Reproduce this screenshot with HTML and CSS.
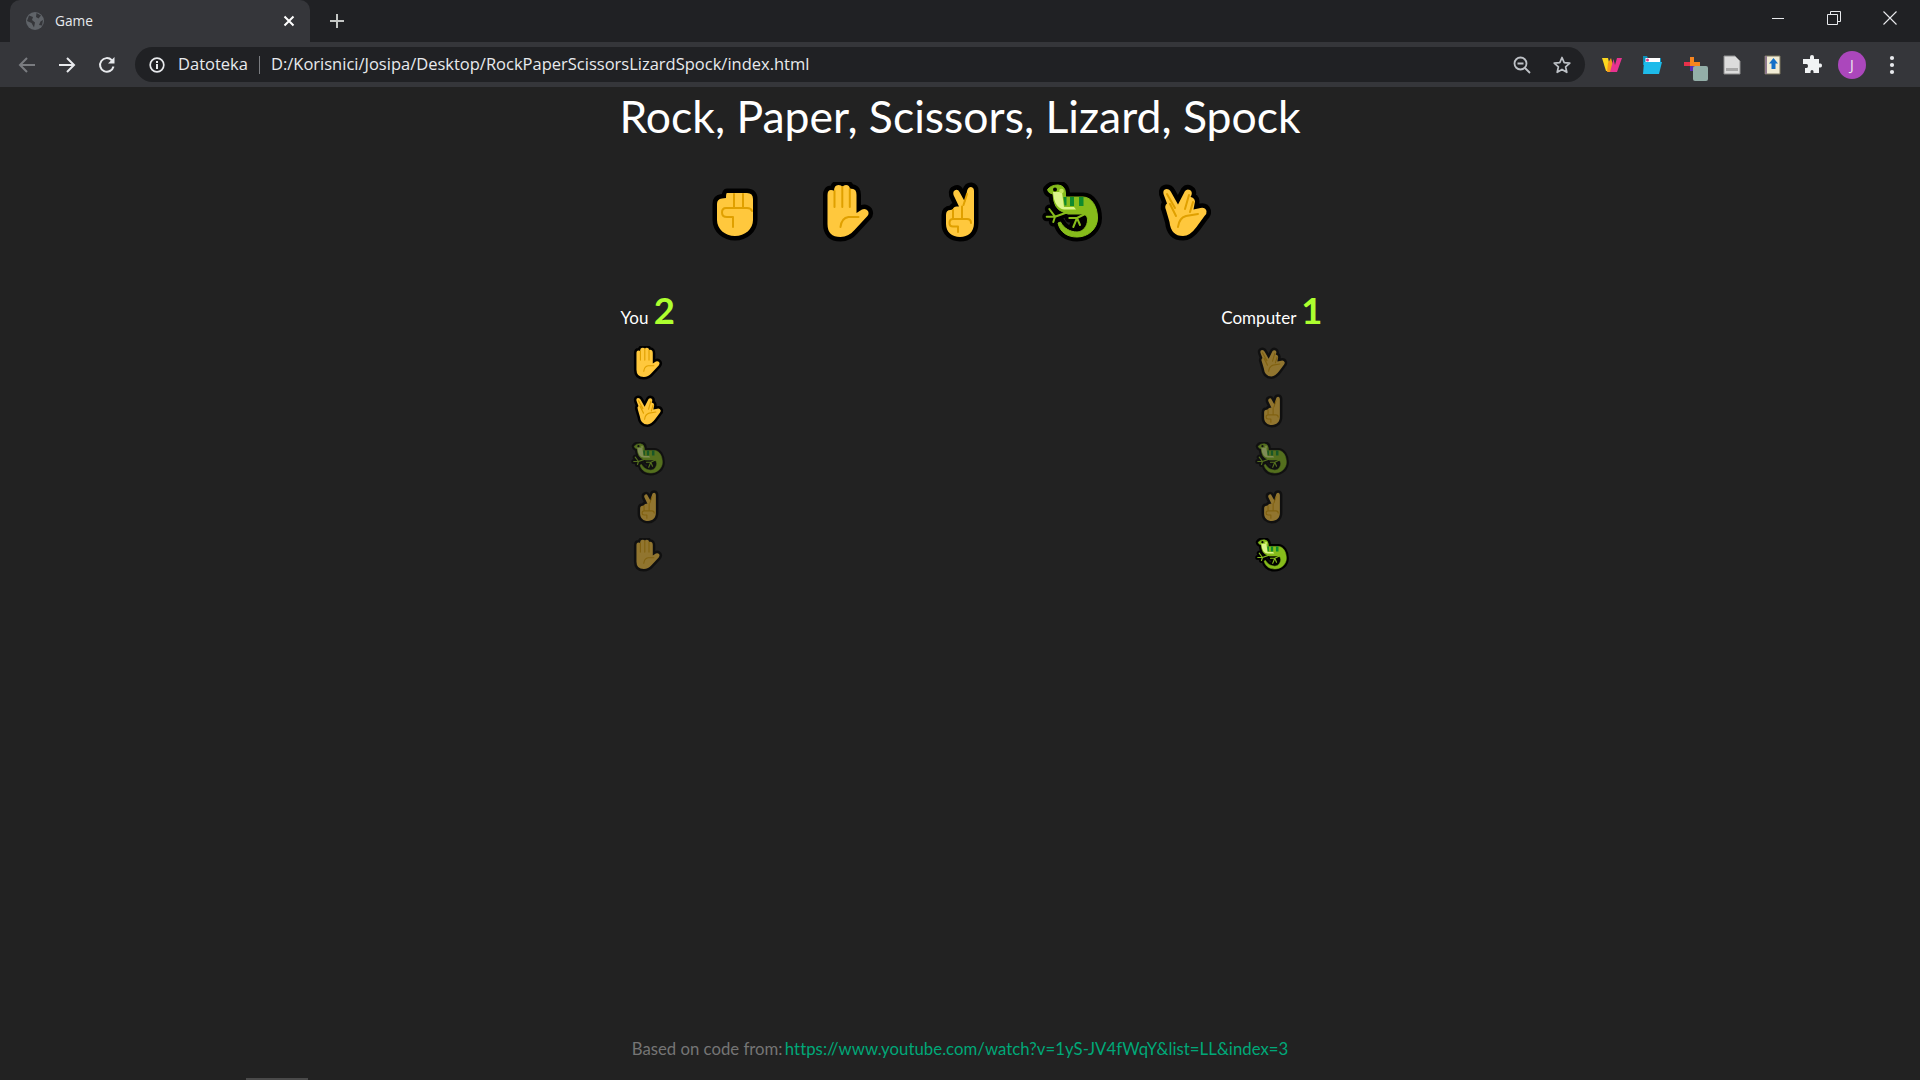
FILE: index.html
```html
<!DOCTYPE html>
<html lang="en">
<head>
<meta charset="utf-8">
<title>Game</title>
<link rel="stylesheet" href="styles.css">
</head>
<body>
<svg class="sprite" xmlns="http://www.w3.org/2000/svg">
  <symbol id="rock" viewBox="1 0 64 64">
    <path class="skin" d="M24 11H44Q50 11 50 17V38C50 47 42 54 32 54C22 54 14 47 14 38V22Q14 17 19 16.500L23 16Q23 11 24 11Z"/>
    <path class="crease" d="M31 12V25M40 12V25M49 29Q48 26 44 26H23Q19 26 19 30.500Q19 35 24 35H30V45"/>
  </symbol>
  <symbol id="paper" viewBox="1.500 0 64 64">
    <path class="skin" d="M13 13Q13 8 16.500 8Q18.500 8 19.500 9Q19.500 3 24 3Q27 3 28 5Q29 3 31.500 3Q35 3 35.500 7Q39 6 41 8.500Q42 10 42 13V31L47.500 27.500Q51 26 53.500 29Q55 32 52.500 34.500L40 48Q34 55 26 55Q13 55 13 42Z"/>
    <path class="crease" d="M20 9V25M27.800 5V25M35.300 7V25M44 35H34Q27 36 26 45"/>
  </symbol>
  <symbol id="scissors" viewBox="0 0 64 64">
    <path class="skin" d="M39 9Q40 5 43 5Q46 5.500 46 9V41C46 50 40 55 32 55C24 55 18 50 18 42V33Q18 28 22.500 28L24.500 27.500Q26 24 29.500 24.500L31 24.500L25.500 13Q24.500 9 27.500 8Q30 7 31.500 10L37 20Z"/>
    <path class="crease" d="M25 28V36M34 24.500V36M43 41Q43 37 39 37H25Q21.500 37 21.500 41Q21.500 44.500 25 44.500H30V50M35.500 23L39 12"/>
  </symbol>
  <symbol id="lizard" viewBox="0 0 64 64">
    <g id="lizard-body">
      <path d="M7.500 7.500Q11 3 18 3Q25 3.500 25.500 11V15H43C52 15 57.500 25 57.500 36C57.500 47 48 55 37 55C27 55 20 50 18 41L20.500 40C23.500 46 30 50 37 50C43 50 47.500 44 47.500 38C47.500 34 45 32 42 32H28L23 30Q13.500 27 13 12L10 11Q8 10 7.500 7.500Z"/>
    </g>
    <g id="lizard-legs">
      <path d="M28 30L15 34.700L9.300 27M15 34.700H6.700M15 34.700L13.300 40M45 32L37 36H29.300M37 36L33.300 45M37 36L40 43"/>
    </g>
    <use href="#lizard-body" class="lizard-out"/>
    <use href="#lizard-legs" class="lizard-out"/>
    <use href="#lizard-body" class="lizard-fill"/>
    <use href="#lizard-legs" class="lizard-toes"/>
    <path class="lizard-light" d="M13 10H22L24 25H34L36 27.500H24Q14 26 13 10Z"/>
    <path class="lizard-stripe" d="M23.500 15H26.500V23.500H24.500ZM30 15H34V24H30ZM39 15H43.500V24H39Z"/>
    <circle class="lizard-eye" cx="15" cy="7.500" r="2"/>
    <circle class="lizard-shine" cx="21.500" cy="9" r="2.300"/>
  </symbol>
  <symbol id="spock" viewBox="0 0 64 64">
    <path class="skin" d="M11.500 12Q10.500 7.500 14.500 7Q17.500 7 19 10L26 22.500L33 9Q35 6.500 38 8Q40.500 9.500 39.500 13L38.500 15Q42.500 15.500 43 19.500L41.500 27.500L48.500 26Q53 25 54.500 29Q55 32 52.500 34L44.500 45Q38 54 31 54Q19 54 17.500 40L14 28Q12 24 15 21.500Z"/>
    <path class="crease" d="M15 12L23 26M18 22L24 34M37 13L33 27M41 20L38 30M46 32L34 34Q27 36 26 45"/>
  </symbol>
</svg>

<header class="chrome">
  <div class="tabstrip">
    <div class="tab">
      <svg class="tab-globe" viewBox="0 0 18 18"><circle cx="9" cy="9" r="9" fill="#5f6368"/><path d="M3 3.500L7 5L6 8L9 10.500L8 15.500L5.500 11L1 9ZM10.500 1L15 3.500L12.500 6.500L10 5ZM17 8L14.500 9.500L13 13L16 13.500Z" fill="#35363a"/></svg>
      <span class="tab-title">Game</span>
      <svg class="tab-close" viewBox="0 0 12 12"><path d="M1.500 1.500L10.500 10.500M10.500 1.500L1.500 10.500" stroke="#fff" stroke-width="2"/></svg>
    </div>
    <svg class="newtab" viewBox="0 0 14 14"><path d="M7 0V14M0 7H14" stroke="#c4c7c5" stroke-width="2"/></svg>
    <div class="winctl">
      <div class="winbtn"><svg class="winicon" viewBox="0 0 14 14"><path d="M1 7.500H13" stroke="#e8eaed" stroke-width="1"/></svg></div>
      <div class="winbtn"><svg class="winicon" viewBox="0 0 14 14"><path d="M.5 3.500H10.500V13.500H.5ZM3.500 3.500V.5H13.500V10.500H10.500" fill="none" stroke="#e8eaed" stroke-width="1"/></svg></div>
      <div class="winbtn"><svg class="winicon" viewBox="0 0 14 14"><path d="M.5 .5L13.500 13.500M13.500 .5L.5 13.500" stroke="#e8eaed" stroke-width="1.100"/></svg></div>
    </div>
  </div>
  <div class="toolbar">
    <div class="navbtn"><svg class="navicon" viewBox="0 0 18 18"><path d="M17 9H2M9 2L2 9L9 16" fill="none" stroke="#7a7c80" stroke-width="2"/></svg></div>
    <div class="navbtn"><svg class="navicon" viewBox="0 0 18 18"><path d="M1 9H16M9 2L16 9L9 16" fill="none" stroke="#e8eaed" stroke-width="2"/></svg></div>
    <div class="navbtn"><svg class="navicon" viewBox="0 0 18 18"><path d="M15.500 10.500A6.800 6.800 0 1 1 13.800 4.200" fill="none" stroke="#e8eaed" stroke-width="2"/><path d="M16.500 1V7.500H10Z" fill="#e8eaed"/></svg></div>
    <div class="omnibox">
      <svg class="info" viewBox="0 0 16 16"><circle cx="8" cy="8" r="6.800" fill="none" stroke="#e8eaed" stroke-width="1.700"/><path d="M7 7H9V12H7ZM7 4H9V6H7Z" fill="#e8eaed"/></svg>
      <span class="scheme">Datoteka</span>
      <span class="omni-sep"></span>
      <span class="url">D:/Korisnici/Josipa/Desktop/RockPaperScissorsLizardSpock/index.html</span>
      <svg class="omni-icon zoomout" viewBox="0 0 18 18"><circle cx="7.500" cy="7.500" r="6" fill="none" stroke="#bdc1c6" stroke-width="1.800"/><path d="M4.500 7.500H10.500M12 12L17 17" stroke="#bdc1c6" stroke-width="1.800"/></svg>
      <svg class="omni-icon star" viewBox="0 0 18 18"><path d="M9 1.500L11.200 6.600L16.800 7.100L12.600 10.800L13.800 16.300L9 13.400L4.200 16.300L5.400 10.800L1.200 7.100L6.800 6.600Z" fill="none" stroke="#bdc1c6" stroke-width="1.700" stroke-linejoin="round"/></svg>
    </div>
    <div class="extensions">
      <div class="ext"><svg class="exticon" viewBox="0 0 20 16"><path d="M0 1H6L9 14H4Z" fill="#fbd71f"/><path d="M6 6L9 1L11 8L9 15H5Z" fill="#f59a1d"/><path d="M8 15L11.500 2L13 8L15 1H20L15 15H11Z" fill="#e8328f"/></svg></div>
      <div class="ext"><svg class="exticon" viewBox="0 0 20 20"><path d="M1 1H5L6 3H19V10H1Z" fill="#0d8fb8"/><path d="M3.500 3H18V11H3.500Z" fill="#fff"/><circle cx="5.500" cy="5" r="1.500" fill="#e33c8c"/><path d="M2 7H20L17 19H1Z" fill="#1ebbea"/></svg></div>
      <div class="ext ext-badged"><svg class="exticon" viewBox="0 0 20 20"><path d="M8 2H12V7H18V11H12V16H8V11H2V7H8Z" fill="#f6851f"/><path d="M2 7H8V11H2Z" fill="#e8314a"/><path d="M8 11H12V16H8Z" fill="#5b2bb5"/></svg><span class="ext-badge"></span></div>
      <div class="ext"><svg class="exticon" viewBox="0 0 18 20"><path d="M1 1H12L17 6V19H1Z" fill="#dcdcdc" stroke="#8e8e8e" stroke-width="1"/><path d="M3 13H15V16H3Z" fill="#a8a8a8"/></svg></div>
      <div class="ext"><svg class="exticon" viewBox="0 0 18 20"><path d="M2 1H17V19H2Z" fill="#f1ecd5" stroke="#7d775f" stroke-width="1"/><path d="M2 1H4V19H2Z" fill="#8f7a8f"/><path d="M10.500 3L15 8.500H12.500V14H8.500V8.500H6Z" fill="#1470c8"/></svg></div>
      <div class="ext"><svg class="exticon" viewBox="0 0 20 20"><path d="M8 2Q8 0 10 0Q12 0 12 2V4H17V8.500H18.500Q20 8.500 20 10.500Q20 12.500 18.500 12.500H17V18H11.500V16.500Q11.500 15 10 15Q8.500 15 8.500 16.500V18H3V13H4.500Q6 13 6 11Q6 9 4.500 9H1V4H8Z" fill="#f1f3f4"/></svg></div>
      <div class="ext"><span class="avatar">J</span></div>
      <div class="ext"><svg class="kebab" viewBox="0 0 6 20"><circle cx="3" cy="3" r="2.100" fill="#e8eaed"/><circle cx="3" cy="10" r="2.100" fill="#e8eaed"/><circle cx="3" cy="17" r="2.100" fill="#e8eaed"/></svg></div>
    </div>
  </div>
</header>

<main class="page">
  <h1 class="title">Rock, Paper, Scissors, Lizard, Spock</h1>
  <div class="choices">
    <svg class="emoji-lg"><use href="#rock"/></svg>
    <svg class="emoji-lg"><use href="#paper"/></svg>
    <svg class="emoji-lg"><use href="#scissors"/></svg>
    <svg class="emoji-lg"><use href="#lizard"/></svg>
    <svg class="emoji-lg"><use href="#spock"/></svg>
  </div>
  <div class="board">
    <section class="player">
      <div class="score-line">You <span class="score">2</span></div>
      <svg class="emoji-sm"><use href="#paper"/></svg>
      <svg class="emoji-sm"><use href="#spock"/></svg>
      <svg class="emoji-sm dim"><use href="#lizard"/></svg>
      <svg class="emoji-sm dim"><use href="#scissors"/></svg>
      <svg class="emoji-sm dim"><use href="#paper"/></svg>
    </section>
    <section class="player">
      <div class="score-line">Computer <span class="score">1</span></div>
      <svg class="emoji-sm dim"><use href="#spock"/></svg>
      <svg class="emoji-sm dim"><use href="#scissors"/></svg>
      <svg class="emoji-sm dim"><use href="#lizard"/></svg>
      <svg class="emoji-sm dim"><use href="#scissors"/></svg>
      <svg class="emoji-sm"><use href="#lizard"/></svg>
    </section>
  </div>
  <footer class="credit">Based on code from: <a class="credit-link" href="#">https://www.youtube.com/watch?v=1yS-JV4fWqY&amp;list=LL&amp;index=3</a></footer>
  <div class="scrollmark"></div>
</main>
</body>
</html>
```

FILE: styles.css
```css
* { box-sizing: border-box; }
html, body { margin: 0; height: 100%; }
body {
  display: flex;
  flex-direction: column;
  height: 100vh;
  overflow: hidden;
  background: #222222;
  color: #fff;
  font-family: Lato, "Liberation Sans", sans-serif;
}
.sprite { display: none; }

/* browser chrome */
.chrome { flex: none; font-family: "Open Sans", "Liberation Sans", sans-serif; }
.tabstrip {
  display: flex;
  align-items: center;
  height: 42px;
  padding-left: 10px;
  background: #202124;
}
.tab {
  display: flex;
  align-items: center;
  width: 300px;
  height: 42px;
  padding: 0 15px 0 16px;
  background: #35363a;
  border-radius: 10px 10px 0 0;
}
.tab-globe { width: 18px; height: 18px; }
.tab-title { margin-left: 11px; padding-bottom: 1px; font-size: 13.7px; color: #e8eaed; }
.tab-close { width: 12px; height: 12px; margin-left: auto; }
.newtab { width: 14px; height: 14px; margin-left: 20px; }
.winctl { display: flex; margin-left: auto; padding-right: 2px; }
.winbtn {
  display: flex;
  align-items: center;
  justify-content: center;
  width: 56px;
  height: 36px;
  margin-top: -6px;
}
.winicon { width: 14px; height: 14px; }
.toolbar {
  display: flex;
  align-items: center;
  height: 45px;
  padding-left: 7px;
  background: #35363a;
}
.navbtn { display: flex; justify-content: center; width: 40px; }
.navicon { width: 18px; height: 18px; }
.omnibox {
  display: flex;
  align-items: center;
  width: 1450px;
  height: 35px;
  margin-left: 8px;
  padding: 0 14px 2px 14px;
  background: #202124;
  border-radius: 18px;
}
.info { width: 16px; height: 16px; margin-top: 2px; }
.scheme { margin-left: 13px; font-size: 16.5px; color: #e8eaed; }
.omni-sep { width: 1px; height: 18px; margin: 2px 11px 0; background: #7a7c80; }
.url { font-size: 16.5px; color: #e8eaed; }
.omni-icon { width: 18px; height: 18px; margin-top: 2px; }
.zoomout { margin-left: auto; margin-right: 22px; }
.extensions { display: flex; align-items: center; margin-left: 7px; }
.ext {
  position: relative;
  display: flex;
  align-items: center;
  justify-content: center;
  width: 40px;
  height: 35px;
}
.exticon { width: 20px; height: 20px; }
.ext-badge {
  position: absolute;
  left: 21px;
  top: 19px;
  width: 15px;
  height: 15px;
  background: #93aea8;
  border-radius: 2px;
}
.avatar {
  display: flex;
  align-items: center;
  justify-content: center;
  width: 28px;
  height: 28px;
  border-radius: 50%;
  background: #ab47bc;
  color: #eee;
  font-size: 14px;
}
.kebab { width: 6px; height: 20px; }

/* page */
.page {
  position: relative;
  flex: 1;
  display: flex;
  flex-direction: column;
  align-items: center;
}
.title {
  margin: 0;
  height: 60px;
  font-size: 44.5px;
  font-weight: 400;
  line-height: 57px;
}
.choices {
  display: flex;
  gap: 48px;
  margin-top: 35px;
}
.emoji-lg { width: 64px; height: 64px; overflow: visible; }
.board {
  display: flex;
  justify-content: space-between;
  width: 702px;
  margin-left: 23px;
  margin-top: 42px;
}
.player {
  display: flex;
  flex-direction: column;
  align-items: center;
  gap: 12px;
}
.score-line {
  height: 44px;
  margin-bottom: 2px;
  font-size: 17px;
  line-height: 44px;
  white-space: nowrap;
}
.score {
  font-size: 36.5px;
  font-weight: 700;
  color: #adff2f;
  margin-left: 1px;
}
.emoji-sm { width: 36px; height: 36px; overflow: visible; }
.dim { opacity: 0.5; }
.credit {
  margin-top: auto;
  padding-bottom: 21px;
  font-size: 16.75px;
  color: #757575;
}
.credit-link { margin-left: -2px; letter-spacing: 0.03px; color: #00a878; text-decoration: none; }
.scrollmark {
  position: absolute;
  left: 246px;
  bottom: 0;
  width: 62px;
  height: 2px;
  background: #4a4a4a;
}

/* emoji art */
.skin {
  fill: #ffc83d;
  stroke: #000;
  stroke-width: 9;
  stroke-linejoin: round;
  paint-order: stroke;
}
.crease {
  fill: none;
  stroke: #e0a000;
  stroke-width: 2;
  stroke-linecap: round;
  stroke-linejoin: round;
}
.lizard-out {
  fill: #000;
  stroke: #000;
  stroke-width: 9;
  stroke-linejoin: round;
  stroke-linecap: round;
}
.lizard-fill {
  fill: #86bc1b;
  stroke: #86bc1b;
  stroke-width: 1;
  stroke-linejoin: round;
}
.lizard-toes {
  fill: none;
  stroke: #86bc1b;
  stroke-width: 2;
  stroke-linecap: round;
  stroke-linejoin: round;
}
.lizard-light { fill: #dbf58a; }
.lizard-stripe { fill: #0f8a2e; }
.lizard-eye { fill: #000; }
.lizard-shine { fill: #c6e85e; }
```
